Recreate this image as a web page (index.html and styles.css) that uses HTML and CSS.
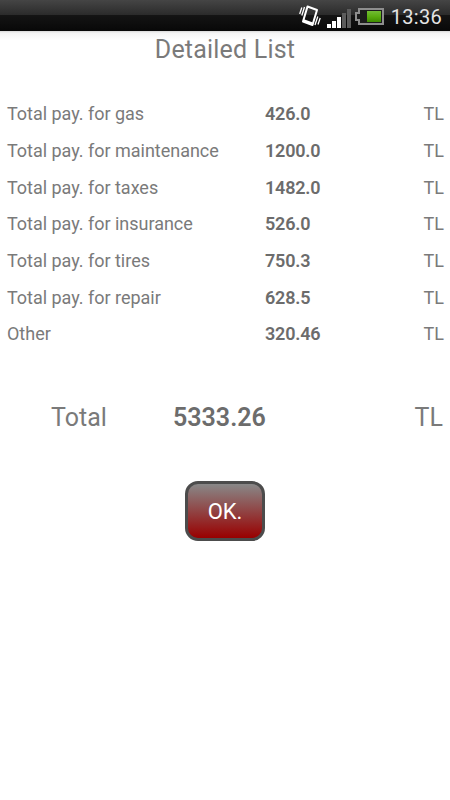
FILE: index.html
```html
<!DOCTYPE html>
<html lang="en">
<head>
  <meta charset="UTF-8" />
  <meta name="viewport" content="width=device-width, initial-scale=1.0" />
  <title>Detailed List</title>
  <link rel="stylesheet" href="styles.css">
</head>
<body>

  <!-- Status bar -->
  <header class="status-bar">
    <svg class="vibrate" width="22" height="22" viewBox="0 0 22 22" fill="none" stroke="#fff">
      <path d="M8.500 1.500 L18 5 L13.500 20 L4 16.500 Z" stroke-width="2" stroke-linejoin="round" />
      <path d="M4.500 15.500 L13.500 18.700" stroke-width="2.500" />
      <path d="M5.500 2 L2.800 10.500 M2.800 2.500 L.700 9 M18.800 11.500 L16 20 M21.200 13 L19 19.500" stroke-width="1.300" />
    </svg>
    <svg class="signal" width="24" height="19" viewBox="0 0 24 19">
      <path fill="#fff" d="M0 15h4v4H0zM5 12h4v7H5zM10 8h4v11h-4z" />
      <path fill="#5c5c5c" d="M15 4h4v15h-4zM20 0h4v19h-4z" />
    </svg>
    <svg class="battery" width="29" height="17" viewBox="0 0 29 17">
      <defs>
        <linearGradient id="charge" x1="0" y1="0" x2="0" y2="1">
          <stop offset="0" stop-color="#72bd35" />
          <stop offset=".5" stop-color="#5aad10" />
          <stop offset="1" stop-color="#3f8d00" />
        </linearGradient>
      </defs>
      <path d="M4 1h24v15H4v-4H1V5h3z" fill="#1c1c1c" stroke="#8e8e8e" stroke-width="2" />
      <path d="M12 3h14v11H12z" fill="url(#charge)" />
    </svg>
    <span class="clock">13:36</span>
  </header>

  <h1>Detailed List</h1>

  <!-- Payments -->
  <div class="list">
    <div class="row"><span>Total pay. for gas</span><b>426.0</b><span>TL</span></div>
    <div class="row"><span>Total pay. for maintenance</span><b>1200.0</b><span>TL</span></div>
    <div class="row"><span>Total pay. for taxes</span><b>1482.0</b><span>TL</span></div>
    <div class="row"><span>Total pay. for insurance</span><b>526.0</b><span>TL</span></div>
    <div class="row"><span>Total pay. for tires</span><b>750.3</b><span>TL</span></div>
    <div class="row"><span>Total pay. for repair</span><b>628.5</b><span>TL</span></div>
    <div class="row"><span>Other</span><b>320.46</b><span>TL</span></div>
  </div>

  <div class="total">
    <span>Total</span><b>5333.26</b><span>TL</span>
  </div>

  <button class="ok">OK.</button>

</body>
</html>
```

FILE: styles.css
```css
* {
  box-sizing: border-box;
}

body {
  font-family: Roboto, sans-serif;
  margin: 0;
  background: #fff;
  color: #7a7a7a;
}

.status-bar {
  display: flex;
  justify-content: flex-end;
  align-items: center;
  height: 31px;
  padding: 2px 8px 0 0;
  background: linear-gradient(#454545, #2b2b2b 48%, #141414 49%, #080808);
  color: #e4e4e4;
}

.vibrate {
  margin-bottom: 1px;
  overflow: visible;
}

.signal {
  margin: 4px 0 0 6px;
}

.battery {
  margin: 0 7px 0 4px;
}

.clock {
  font-size: 20px;
  letter-spacing: 0.3px;
}

h1 {
  margin: 0;
  height: 65px;
  line-height: 38px;
  background: linear-gradient(#d8d8d8, #f4f4f4 2px, #fff 9px);
  text-align: center;
  font-size: 25px;
  font-weight: 400;
  letter-spacing: 0.2px;
}

b {
  font-weight: 600;
  color: #6c6c6c;
}

.list {
  margin-top: -0.5px;
}

.row {
  display: grid;
  grid-template-columns: 258px 1fr auto;
  align-items: center;
  height: 36.670px;
  padding: 0 6px 0 7px;
  font-size: 18px;
  letter-spacing: -0.02px;
}

.row b {
  letter-spacing: -0.2px;
}

.total {
  display: grid;
  grid-template-columns: 122px 1fr auto;
  align-items: center;
  height: 50px;
  margin-top: 40.5px;
  padding: 0 7px 0 51px;
  font-size: 25px;
}

.ok {
  display: block;
  width: 80px;
  height: 60px;
  margin: 38px auto 0;
  padding-top: 3px;
  border: 3px solid #4c4c4c;
  border-radius: 13px;
  background: linear-gradient(#888, #900);
  color: #fff;
  font-family: inherit;
  font-size: 22px;
}
```
